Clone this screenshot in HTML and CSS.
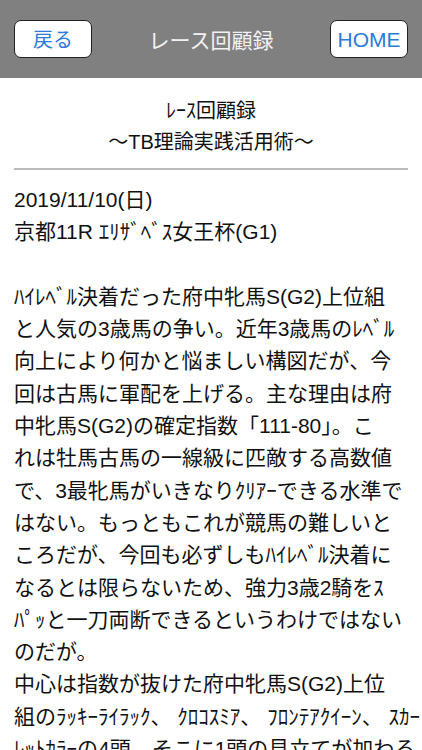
FILE: index.html
```html
<!DOCTYPE html>
<html lang="ja">
<head>
<meta charset="utf-8">
<title>レース回顧録</title>
<link rel="stylesheet" href="styles.css">
</head>
<body>
<header class="navbar">
  <button class="nav-btn">戻る</button>
  <div class="nav-title">レース回顧録</div>
  <button class="nav-btn nav-btn-home">HOME</button>
</header>
<main class="content">
  <div class="page-head">
    <div class="page-head-line">ﾚｰｽ回顧録</div>
    <div class="page-head-line">～TB理論実践活用術～</div>
  </div>
  <hr class="divider">
  <p class="article">2019/11/10(日)<br>京都11R ｴﾘｻﾞﾍﾞｽ女王杯(G1)<br><br>ﾊｲﾚﾍﾞﾙ決着だった府中牝馬S(G2)上位組<br>と人気の3歳馬の争い。近年3歳馬のﾚﾍﾞﾙ<br>向上により何かと悩ましい構図だが、今<br>回は古馬に軍配を上げる。主な理由は府<br>中牝馬S(G2)の確定指数「111-80」。こ<br>れは牡馬古馬の一線級に匹敵する高数値<br>で、3最牝馬がいきなりｸﾘｱｰできる水準で<br>はない。もっともこれが競馬の難しいと<br>ころだが、今回も必ずしもﾊｲﾚﾍﾞﾙ決着に<br>なるとは限らないため、強力3歳2騎をｽ<br>ﾊﾟｯと一刀両断できるというわけではない<br>のだが。<br>中心は指数が抜けた府中牝馬S(G2)上位<br>組のﾗｯｷｰﾗｲﾗｯｸ、 ｸﾛｺｽﾐｱ、 ﾌﾛﾝﾃｱｸｲｰﾝ、 ｽｶｰ<br>ﾚｯﾄｶﾗｰの4頭。そこに1頭の見立てが加わる</p>
</main>
</body>
</html>
```
FILE: styles.css
```css
html, body {
  margin: 0;
  padding: 0;
  background: #ffffff;
}
body {
  font-family: "Liberation Sans", "Noto Sans CJK JP", sans-serif;
  color: #111111;
  width: 422px;
  overflow: hidden;
}
.navbar {
  height: 78px;
  background: #808080;
  display: flex;
  align-items: center;
  justify-content: space-between;
  padding: 0 14px;
  box-sizing: border-box;
}
.nav-btn {
  width: 78px;
  height: 38px;
  background: #ffffff;
  border: 1.5px solid #222222;
  border-radius: 7px;
  color: #2b7bd9;
  font-family: "Noto Sans CJK JP", sans-serif;
  font-size: 20px;
  line-height: 1;
  padding: 0;
  display: flex;
  align-items: center;
  justify-content: center;
}
.nav-btn-home {
  font-family: "Liberation Sans", "Noto Sans CJK JP", sans-serif;
  font-size: 21px;
}
.nav-title {
  font-family: "Noto Sans CJK JP", sans-serif;
  color: #f2f2f2;
  font-size: 21px;
  line-height: 1;
}
.content {
  padding: 0 14px;
}
.page-head {
  padding-top: 18px;
  text-align: center;
  font-size: 20px;
  line-height: 31px;
}
.divider {
  margin: 10px 0 0;
  border: 0;
  height: 2px;
  background: #bcbcbc;
}
.article {
  margin: 14px 0 0;
  font-size: 21px;
  line-height: 32.3px;
  white-space: nowrap;
}
```
